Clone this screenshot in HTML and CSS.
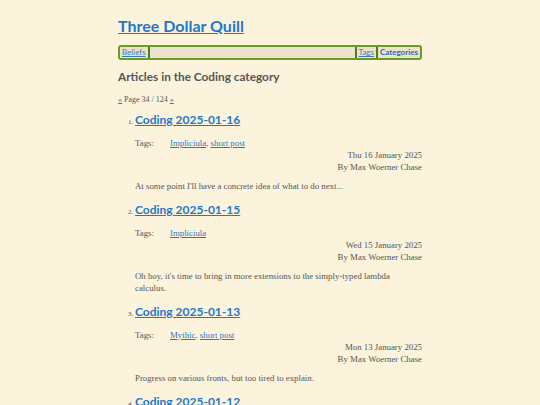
FILE: index.html
```html
<!DOCTYPE html>
<html>
<head>
<meta charset="utf-8">
<link rel="stylesheet" href="styles.css">
</head>
<body>
<div class="page">
  <header class="site-header">
    <h1 class="site-title"><a href="#">Three Dollar Quill</a></h1>
    <nav class="nav">
      <a class="nav-link nav-left" href="#">Beliefs</a>
      <span class="nav-fill"></span>
      <a class="nav-link nav-sep" href="#">Tags</a>
      <a class="nav-link nav-sep nav-active" href="#">Categories</a>
    </nav>
  </header>
  <h2 class="cat-title">Articles in the Coding category</h2>
  <p class="pager"><a href="#">«</a> Page 34 / 124 <a href="#">»</a></p>
  <ol class="articles" start="1">
    <li class="article">
      <h3 class="art-title"><a href="#">Coding 2025-01-16</a></h3>
      <div class="tags"><span class="tags-label">Tags:</span><span><a href="#">Impliciula</a>, <a href="#">short post</a></span></div>
      <div class="meta">Thu 16 January 2025</div>
      <div class="meta">By Max Woerner Chase</div>
      <p class="summary">At some point I'll have a concrete idea of what to do next...</p>
    </li>
    <li class="article">
      <h3 class="art-title"><a href="#">Coding 2025-01-15</a></h3>
      <div class="tags"><span class="tags-label">Tags:</span><span><a href="#">Impliciula</a></span></div>
      <div class="meta">Wed 15 January 2025</div>
      <div class="meta">By Max Woerner Chase</div>
      <p class="summary">Oh boy, it's time to bring in more extensions to the simply-typed lambda calculus.</p>
    </li>
    <li class="article">
      <h3 class="art-title"><a href="#">Coding 2025-01-13</a></h3>
      <div class="tags"><span class="tags-label">Tags:</span><span><a href="#">Mythic</a>, <a href="#">short post</a></span></div>
      <div class="meta">Mon 13 January 2025</div>
      <div class="meta">By Max Woerner Chase</div>
      <p class="summary">Progress on various fronts, but too tired to explain.</p>
    </li>
    <li class="article">
      <h3 class="art-title"><a href="#">Coding 2025-01-12</a></h3>
      <div class="tags"><span class="tags-label">Tags:</span><span><a href="#">Mythic</a></span></div>
      <div class="meta">Sun 12 January 2025</div>
      <div class="meta">By Max Woerner Chase</div>
      <p class="summary">More work.</p>
    </li>
  </ol>
</div>
</body>
</html>
```

FILE: styles.css
```css
html, body {
  margin: 0;
  padding: 0;
  background: #fbf3dc;
}
body {
  font-family: "Liberation Serif", serif;
  font-size: 8.8px;
  color: #555;
}
a { color: #2a79c4; }
.page {
  width: 304px;
  margin: 0 auto;
  padding-top: 14px;
}
.site-title {
  margin: 0;
  font-family: Lato, sans-serif;
  font-size: 16px;
  font-weight: 700;
  line-height: 24px;
}
.site-title a { color: #1f78c8; }
.nav {
  margin-top: 7px;
  display: flex;
  align-items: stretch;
  border: 2px solid #6b9b22;
  border-radius: 3px;
  background: #ebe3cb;
  font-family: Lato, sans-serif;
  font-size: 8px;
  line-height: 11px;
}
.nav-link {
  padding: 0 2px;
  color: #3a7cc0;
}
.nav-left { border-right: 2px solid #4f7f12; }
.nav-fill { flex: 1; }
.nav-sep { border-left: 2px solid #4f7f12; }
.nav-active { font-weight: 700; color: #2a6bb0; text-decoration: none; }
.cat-title {
  margin: 8px 0 0;
  font-family: Lato, sans-serif;
  font-size: 11.8px;
  font-weight: 700;
  color: #555;
  line-height: 18px;
}
.pager {
  margin: 9px 0 0;
  font-size: 8px;
  line-height: 10px;
}
.articles {
  margin: 6px 0 0;
  padding-left: 17px;
}
.article { font-size: 7px; }
.art-title {
  margin: 0;
  font-family: Lato, sans-serif;
  font-size: 12px;
  font-weight: 700;
  line-height: 18px;
  display: inline;
}
.art-title a { color: #1f78c8; }
.tags {
  margin-top: 8px;
  display: flex;
  font-size: 8.8px;
  line-height: 12px;
}
.tags-label { width: 35px; }
.meta {
  text-align: right;
  font-size: 8.8px;
  line-height: 12px;
}
.summary {
  margin: 7px 0 9px;
  font-size: 8.8px;
  line-height: 12px;
}
```
